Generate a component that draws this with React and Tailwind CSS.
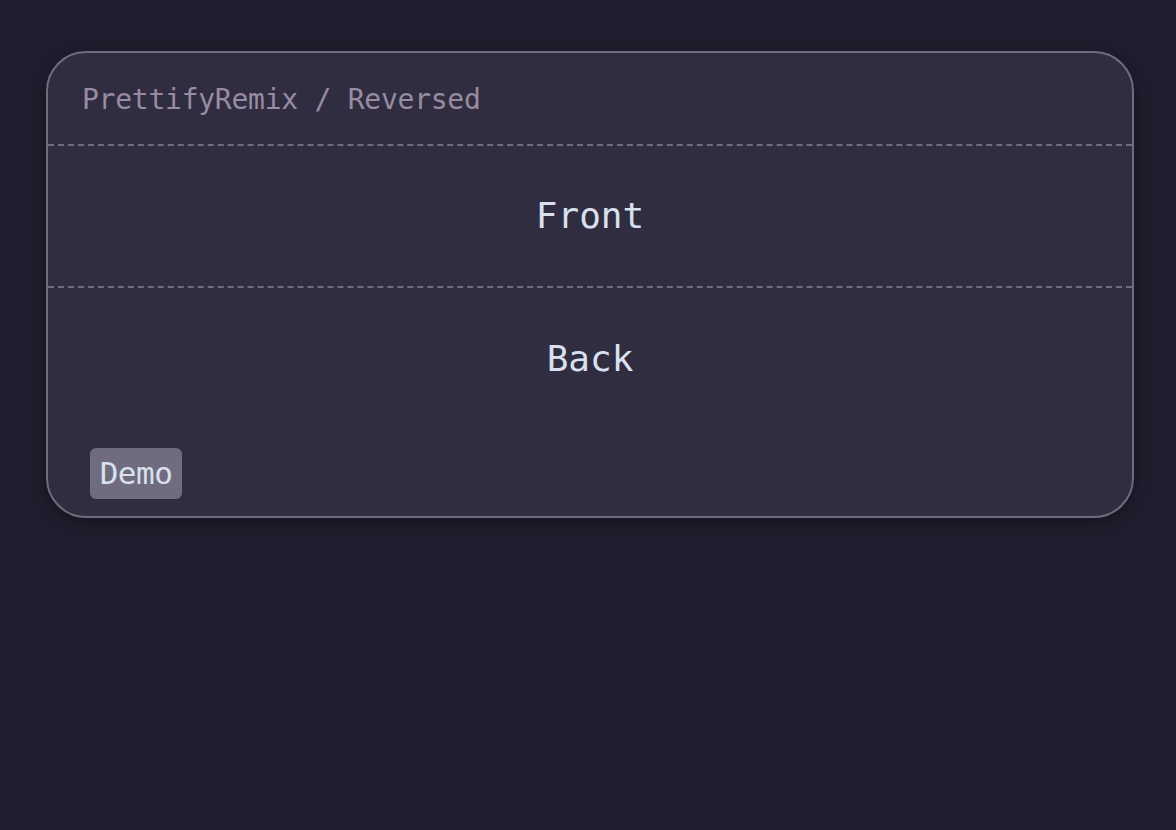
export default function App() {
  const mono = { fontFamily: '"DejaVu Sans Mono", "Liberation Mono", monospace' };
  return (
    <div className="min-h-[830px] w-full bg-[#1e1e2e] pt-[51px] pl-[46px]" style={mono}>
      <div className="w-[1088px] rounded-[40px] border-2 border-[#6e6c7e] bg-[#302d41] shadow-[0_4px_18px_rgba(0,0,0,0.35)] overflow-hidden">
        <div className="h-[93px] flex items-center pl-[34px] pt-[2px] border-b-2 border-dashed border-[#6e6c7e] text-[28px] tracking-[-0.25px] text-[#988ba2]">
          PrettifyRemix / Reversed
        </div>
        <div className="h-[142px] flex items-center justify-center border-b-2 border-dashed border-[#6e6c7e] text-[36px] text-[#d9e0ee]">
          Front
        </div>
        <div className="h-[142px] flex items-center justify-center text-[36px] text-[#d9e0ee]">
          Back
        </div>
        <div className="h-[86px] pl-[42px] pt-[18px]">
          <span className="inline-flex items-center justify-center h-[51px] w-[92px] rounded-[6px] bg-[#6e6c7e] text-[31px] tracking-[-0.5px] text-[#d9e0ee]">
            Demo
          </span>
        </div>
      </div>
    </div>
  );
}
